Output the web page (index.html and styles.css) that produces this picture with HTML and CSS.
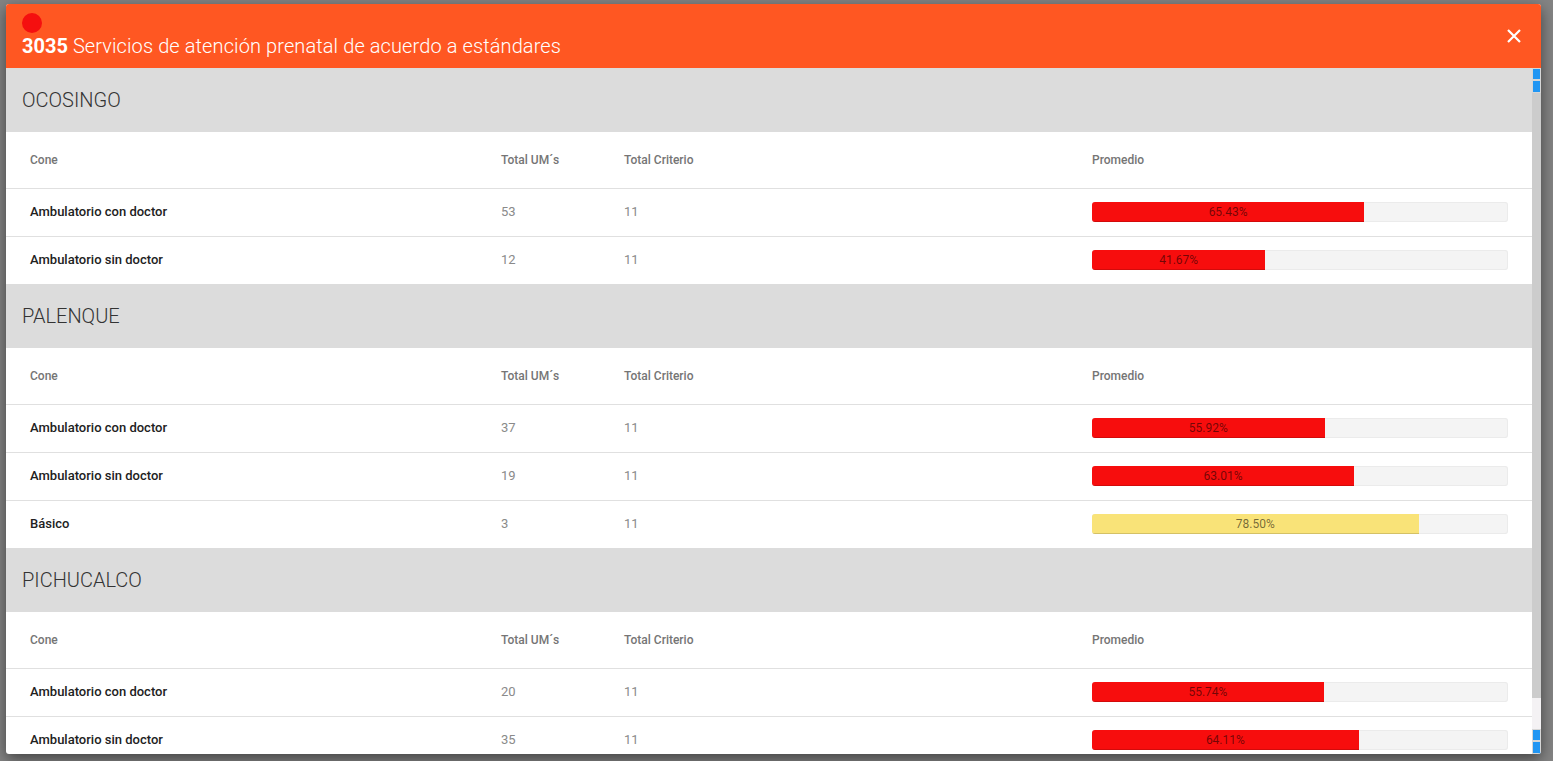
FILE: index.html
```html
<!DOCTYPE html>
<html lang="es">
<head>
<meta charset="utf-8">
<title>3035 Servicios de atención prenatal</title>
<link rel="stylesheet" href="styles.css">
</head>
<body>
<div class="backdrop">
  <div class="modal">
    <div class="modal-header">
      <div class="dot"></div>
      <h1 class="title"><b>3035</b> Servicios de atención prenatal de acuerdo a estándares</h1>
      <button class="close" aria-label="Cerrar">
        <svg width="16" height="16" viewBox="0 0 16 16"><path d="M2 2 L14 14 M14 2 L2 14" stroke="#fff" stroke-width="2.2" fill="none"/></svg>
      </button>
    </div>
    <div class="modal-body">
      <div class="content">
        <section class="group">
          <div class="group-title">OCOSINGO</div>
          <div class="row head"><span>Cone</span><span>Total UM´s</span><span>Total Criterio</span><span>Promedio</span></div>
          <div class="row"><span class="name">Ambulatorio con doctor</span><span class="num">53</span><span class="num">11</span><div class="bar"><div class="fill red" style="width:65.43%">65.43%</div></div></div>
          <div class="row"><span class="name">Ambulatorio sin doctor</span><span class="num">12</span><span class="num">11</span><div class="bar"><div class="fill red" style="width:41.67%">41.67%</div></div></div>
        </section>
        <section class="group">
          <div class="group-title">PALENQUE</div>
          <div class="row head"><span>Cone</span><span>Total UM´s</span><span>Total Criterio</span><span>Promedio</span></div>
          <div class="row"><span class="name">Ambulatorio con doctor</span><span class="num">37</span><span class="num">11</span><div class="bar"><div class="fill red" style="width:55.92%">55.92%</div></div></div>
          <div class="row"><span class="name">Ambulatorio sin doctor</span><span class="num">19</span><span class="num">11</span><div class="bar"><div class="fill red" style="width:63.01%">63.01%</div></div></div>
          <div class="row"><span class="name">Básico</span><span class="num">3</span><span class="num">11</span><div class="bar"><div class="fill yellow" style="width:78.50%">78.50%</div></div></div>
        </section>
        <section class="group">
          <div class="group-title">PICHUCALCO</div>
          <div class="row head"><span>Cone</span><span>Total UM´s</span><span>Total Criterio</span><span>Promedio</span></div>
          <div class="row"><span class="name">Ambulatorio con doctor</span><span class="num">20</span><span class="num">11</span><div class="bar"><div class="fill red" style="width:55.74%">55.74%</div></div></div>
          <div class="row"><span class="name">Ambulatorio sin doctor</span><span class="num">35</span><span class="num">11</span><div class="bar"><div class="fill red" style="width:64.11%">64.11%</div></div></div>
        </section>
      </div>
      <div class="scrollbar" aria-hidden="true">
        <div class="sb-btn"></div>
        <div class="sb-btn"></div>
        <div class="sb-thumb"></div>
        <div class="sb-track"></div>
        <div class="sb-btn"></div>
        <div class="sb-btn"></div>
      </div>
    </div>
  </div>
</div>
</body>
</html>
```
FILE: styles.css
```css
* { box-sizing: border-box; }
html, body { margin: 0; padding: 0; }
body {
  background: #848484;
  font-family: Roboto, "Noto Sans", "Liberation Sans", sans-serif;
  overflow: hidden;
  width: 1553px;
  height: 761px;
}
.backdrop {
  padding: 4px 12px 7px 6px;
  height: 761px;
  display: flex;
}
.modal {
  flex: 1;
  display: flex;
  flex-direction: column;
  background: #fff;
  border-radius: 3px;
  box-shadow: 0 5px 15px rgba(0,0,0,0.5);
  overflow: hidden;
}
.modal-header {
  flex: none;
  height: 64px;
  background: #ff5722;
  color: #fff;
  position: relative;
  padding: 9px 16px 0 16px;
}
.dot {
  width: 20px;
  height: 20px;
  border-radius: 50%;
  background: #f50f0f;
  margin-bottom: 1px;
}
.title {
  margin: 0;
  font-size: 20px;
  line-height: 24px;
  font-weight: 300;
  letter-spacing: 0.1px;
}
.title b { font-weight: 700; letter-spacing: 0; }
.close {
  position: absolute;
  right: 19px;
  top: 24px;
  width: 16px;
  height: 16px;
  padding: 0;
  border: 0;
  background: transparent;
  display: flex;
}
.modal-body {
  flex: 1;
  display: flex;
  min-height: 0;
}
.content {
  flex: 1;
  overflow: hidden;
}
.scrollbar {
  flex: none;
  width: 9px;
  display: flex;
  flex-direction: column;
}
.sb-btn {
  height: 12px;
  flex: none;
  background: #2196f3;
  border: 1px solid #d6d6d6;
}
.sb-btn + .sb-btn { height: 13px; }
.sb-thumb {
  height: 605px;
  flex: none;
  background: #cccccc;
}
.sb-track {
  flex: 1;
  background: #f4f2f4;
}
.group-title {
  height: 64px;
  background: #dcdcdc;
  display: flex;
  align-items: center;
  padding-left: 16px;
  font-size: 20px;
  font-weight: 300;
  color: #333;
}
.row {
  display: grid;
  grid-template-columns: 471px 123px 468px 1fr;
  align-items: center;
  padding: 0 24px 2px;
  height: 48px;
  border-top: 1px solid #e0e0e0;
  font-size: 13px;
}
.row .bar { margin-top: 1px; }
.row.head {
  height: 56px;
  padding-bottom: 0;
  border-top: 0;
  font-size: 12px;
  font-weight: 500;
  color: #757575;
}
.name { font-weight: 500; color: #212121; }
.num { color: #8a8a8a; font-weight: 400; }
.bar {
  height: 20px;
  background: #f4f4f4;
  border-radius: 3px;
  box-shadow: inset 0 0 0 1px #ebebeb;
  overflow: hidden;
  display: flex;
}
.fill {
  height: 100%;
  font-size: 12px;
  line-height: 20px;
  text-align: center;
  color: rgba(0,0,0,0.55);
  font-weight: 400;
  box-shadow: inset 0 -1px 0 rgba(0,0,0,0.15);
}
.fill.red { background: #f70d0d; }
.fill.yellow { background: #f9e378; }
```
